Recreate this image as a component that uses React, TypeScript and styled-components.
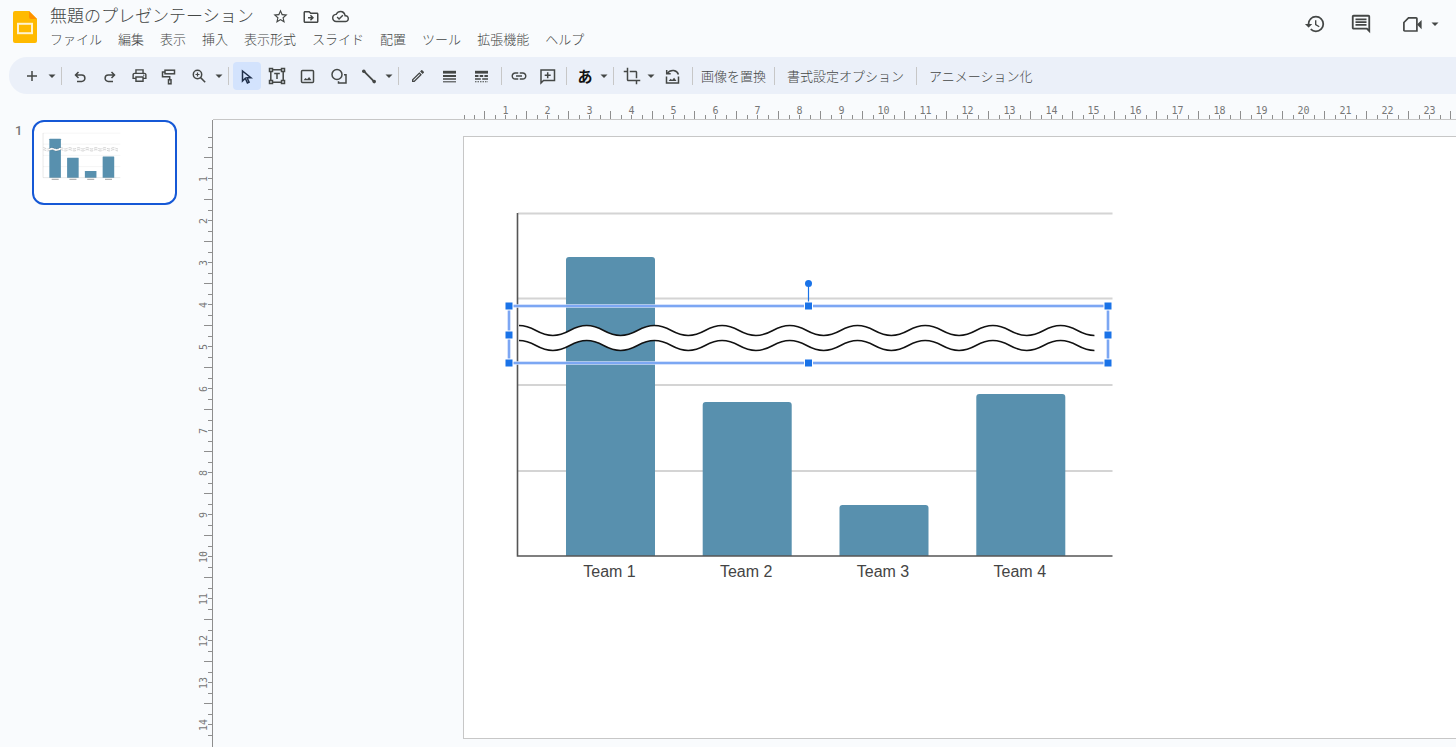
import React from "react";
import styled, { createGlobalStyle, css } from "styled-components";
import {
  MdCrop,
  MdHistory,
  MdLink,
  MdOutlineCloudDone,
  MdOutlineComment,
  MdOutlineDriveFileMove,
  MdOutlineEdit,
  MdOutlinePrint,
  MdStarBorder,
} from "react-icons/md";

const colors = {
  page: "#f9fbfd",
  toolbar: "#ebf0f9",
  active: "#d3e3fd",
  ink: "#444746",
  muted: "#777777",
  rule: "#c7c7c7",
  tick: "#8e8e8e",
  bar: "#5890ae",
  accent: "#1a73e8",
};

const GlobalStyle = createGlobalStyle`
  *, *::before, *::after { box-sizing: border-box; }
  body {
    margin: 0;
    background: ${colors.page};
    color: ${colors.ink};
    font-family: "Noto Sans CJK JP", sans-serif;
    font-weight: 300;
    font-size: 13px;
  }
  button {
    border: 0;
    padding: 0;
    background: none;
    color: inherit;
    font: inherit;
    cursor: pointer;
  }
  svg { display: block; flex: none; }
`;

const Page = styled.div`
  display: flex;
  flex-direction: column;
  min-height: 100vh;
  overflow: hidden;
`;

const Header = styled.header`
  display: flex;
  height: 57px;
  padding: 4px 16px 0 12px;
`;

const Logo = styled.a`
  flex: none;
  width: 37px;
  padding: 7px 0 0 1px;
`;

const HeaderMain = styled.div`
  flex: 1;
  min-width: 0;
`;

const TitleRow = styled.div`
  display: flex;
  align-items: center;
  gap: 12px;
  height: 25px;
`;

const Title = styled.h1`
  margin: 0 6px 0 1px;
  padding-bottom: 3px;
  font-size: 17px;
  font-weight: 300;
  line-height: 22px;
  white-space: nowrap;
`;

const PlainIcon = styled.button`
  display: flex;
  align-items: center;
  justify-content: center;
  width: 18px;
  height: 18px;
`;

const Menu = styled.nav`
  display: flex;
  gap: 16px;
  padding-left: 1px;
`;

const MenuItem = styled.button`
  height: 20px;
  line-height: 20px;
  white-space: nowrap;
`;

const HeaderActions = styled.div`
  display: flex;
  align-items: center;
  gap: 24px;
  height: 40px;
`;

const ActionIcon = styled.button<{ $wide?: boolean }>`
  display: flex;
  align-items: center;
  gap: 8px;
  height: 22px;
  padding-left: ${(p) => (p.$wide ? 6 : 0)}px;
`;

const Toolbar = styled.div`
  display: flex;
  align-items: center;
  height: 37px;
  margin-left: 9px;
  padding-left: 8px;
  border-radius: 18px 0 0 18px;
  background: ${colors.toolbar};
`;

const Divider = styled.span`
  flex: none;
  width: 1px;
  height: 18px;
  margin: 0 4px;
  background: ${colors.rule};
`;

const ToolButton = styled.button<{ $width?: number; $active?: boolean }>`
  display: flex;
  flex: none;
  align-items: center;
  justify-content: center;
  width: ${(p) => p.$width ?? 30}px;
  height: 28px;
  ${(p) =>
    p.$active &&
    css`
      border-radius: 4px;
      background: ${colors.active};
      color: #1f2f4a;
    `}
`;

const TextButton = styled.button<{ $pad: number }>`
  flex: none;
  height: 28px;
  padding: 0 ${(p) => p.$pad}px;
  line-height: 26px;
  white-space: nowrap;
`;

const InputGlyph = styled.span`
  color: #111;
  font-size: 15px;
  font-weight: 700;
  line-height: 28px;
`;

const Workspace = styled.main`
  display: grid;
  flex: 1;
  grid-template-columns: 196px 17px minmax(0, 1fr);
  grid-template-rows: 26px minmax(0, 1fr);
`;

const Filmstrip = styled.aside`
  display: flex;
  grid-row: 1 / 3;
  gap: 10px;
  align-items: flex-start;
  padding: 26px 0 0 15px;
`;

const SlideNumber = styled.span`
  width: 7px;
  padding-top: 2px;
  color: ${colors.muted};
  font-family: Roboto, sans-serif;
  font-size: 13px;
  font-weight: 500;
  line-height: 18px;
`;

const Thumbnail = styled.button`
  width: 145px;
  height: 85px;
  overflow: hidden;
  border: 2px solid #1558d6;
  border-radius: 12px;
  background: #fff;
`;

const rulerText = css`
  color: ${colors.muted};
  font-family: "DejaVu Sans Mono", monospace;
  font-size: 10px;
  font-weight: 400;
  line-height: 10px;
`;

const RulerX = styled.div`
  display: flex;
  grid-column: 3;
  overflow: hidden;
  border-bottom: 1px solid ${colors.rule};
`;

const ScaleX = styled.div`
  display: flex;
  flex: none;
  height: 26px;
  margin-left: 251px;
  border-bottom: 1px solid ${colors.tick};
`;

const CellX = styled.div`
  display: grid;
  flex: none;
  width: 42px;
  ${rulerText}

  > * {
    grid-area: 1 / 1;
  }
`;

const LabelX = styled.span`
  padding: 12px 0 0 1px;
  text-align: center;
`;

const TicksX = styled.div<{ $short?: boolean }>`
  display: grid;
  flex: none;
  grid-template-columns: ${(p) => (p.$short ? "10px 10px" : "11px 10px 11px 10px")};
  align-items: end;
  align-self: end;
`;

const TickX = styled.i<{ $tall?: boolean }>`
  height: ${(p) => (p.$tall ? 8 : 4)}px;
  border-left: 1px solid ${colors.tick};
`;

const RulerY = styled.div`
  grid-row: 2;
  grid-column: 2;
  height: 627px;
  min-height: 100%;
  overflow: hidden;
  padding-top: 17px;
  border-right: 1px solid ${colors.tick};
`;

const CellY = styled.div`
  display: grid;
  height: 42px;
  ${rulerText}

  > * {
    grid-area: 1 / 1;
  }
`;

const LabelY = styled.span`
  justify-self: start;
  margin-left: 3px;
  padding-bottom: 2px;
  text-align: center;
  writing-mode: vertical-rl;
  transform: rotate(180deg);
`;

const TicksY = styled.div<{ $short?: boolean }>`
  display: grid;
  grid-template-rows: ${(p) => (p.$short ? "10px 10px" : "11px 10px 11px 10px")};
  justify-items: end;
`;

const TickY = styled.i<{ $tall?: boolean }>`
  width: ${(p) => (p.$tall ? 8 : 4)}px;
  border-top: 1px solid ${colors.tick};
`;

const Canvas = styled.section`
  grid-column: 3;
  overflow: hidden;
  padding: 16px 0 8px 250px;
`;

const Slide = styled.div`
  width: 1070px;
  height: 603px;
  border: 1px solid ${colors.rule};
  background: #fff;
`;

const Icon = ({ children, size = 18 }: { children: React.ReactNode; size?: number }) => (
  <svg
    width={size}
    height={size}
    viewBox={`0 0 ${size} ${size}`}
    fill="none"
    stroke="currentColor"
    strokeWidth="1.5"
    aria-hidden="true"
  >
    {children}
  </svg>
);

const Caret = () => (
  <svg width="10" height="10" viewBox="0 0 10 10" fill="currentColor" aria-hidden="true">
    <path d="M1.5 3.5h7L5 7z" />
  </svg>
);

const CaretButton = ({ label }: { label: string }) => (
  <ToolButton $width={10} aria-label={label}>
    <Caret />
  </ToolButton>
);

const SlidesLogo = () => (
  <svg width="24" height="32" viewBox="0 0 24 32" aria-hidden="true">
    <path d="M2 0h14l8 8v22a2 2 0 0 1-2 2H2a2 2 0 0 1-2-2V2a2 2 0 0 1 2-2z" fill="#ffba00" />
    <path d="M16 0l8 8h-6a2 2 0 0 1-2-2z" fill="#ff9100" />
    <rect x="5" y="12.8" width="14" height="9.4" fill="none" stroke="#fff3d0" strokeWidth="2" />
  </svg>
);

const PaintIcon = () => (
  <Icon>
    <rect x="5" y="3.2" width="9.5" height="3.6" />
    <path d="M5 5H2.5v4.8h7.2v3" />
    <rect x="8.5" y="12.8" width="2.5" height="4" />
  </Icon>
);

const TextBoxIcon = () => (
  <Icon>
    <path d="M4.5 2.8h9M4.5 15.2h9M2.8 4.5v9M15.2 4.5v9" />
    <path d="M1.5 1.5h3v3h-3zM13.5 1.5h3v3h-3zM1.5 13.5h3v3h-3zM13.5 13.5h3v3h-3z" />
    <path d="M6.2 6.5h5.600M9 6.5v5.500" />
  </Icon>
);

const ImageIcon = () => (
  <Icon>
    <rect x="2.5" y="3.5" width="12" height="12" rx="1" />
    <path d="M4.5 13.200l2-2.200 1.600 1.300 2-2.400 2.400 3.300z" fill="currentColor" stroke="none" />
  </Icon>
);

const ShapeIcon = () => (
  <Icon>
    <circle cx="7" cy="7.5" r="5" />
    <path d="M14 7.800h2v8.200H8.500V14.200" />
  </Icon>
);

const LineIcon = () => (
  <Icon>
    <path d="M3.8 4.2l10.4 10.4" strokeWidth="1.8" />
    <circle cx="3.8" cy="4.2" r="1.8" fill="currentColor" stroke="none" />
    <circle cx="14.2" cy="14.6" r="1.8" fill="currentColor" stroke="none" />
  </Icon>
);

const WeightIcon = () => (
  <Icon>
    <path d="M3 5.2h13" strokeWidth="2.8" />
    <path d="M3 9h13" strokeWidth="2" />
    <path d="M3 12h13" />
    <path d="M3 14.8h13" strokeWidth="1.1" />
  </Icon>
);

const DashIcon = () => (
  <Icon>
    <path d="M3 5.2h13" strokeWidth="2.8" />
    <path d="M3 9h13" strokeWidth="1.8" strokeDasharray="3.5 1.2" />
    <path d="M3 12h13" strokeDasharray="5.800 1.400" />
    <path d="M3 14.8h13" strokeWidth="1.1" strokeDasharray="1.5 1" />
  </Icon>
);

const ResetImageIcon = () => (
  <Icon>
    <path d="M3.5 9.500v6.500h12V9.500M3.700 3v3.800h4" />
    <path d="M4.100 6.500C6 3.900 8.400 3.200 10.800 3.500c2.400.4 4 1.800 4.600 4" />
    <path d="M5.600 14l2-2.200 1.500 1.300 2-2.400 2.400 3.300z" fill="currentColor" stroke="none" />
  </Icon>
);

const VideoIcon = () => (
  <Icon size={20}>
    <path d="M6.500 3.900h7.600a.8.8 0 0 1 .8.8v12.300H2.700a.8.8 0 0 1-.8-.8V8.500z" strokeWidth="1.7" />
    <path d="M15 10.600l4.600-4.600v9.200z" fill="currentColor" stroke="none" />
  </Icon>
);

const teams = [
  { name: "Team 1", x: 566, top: 257 },
  { name: "Team 2", x: 702.7, top: 402 },
  { name: "Team 3", x: 839.5, top: 505 },
  { name: "Team 4", x: 976.3, top: 394 },
];

const BASE = 556;
const WAVE_START = 519;
const HALF_WAVE = 33.85;
const HALF_WAVES = 17;

/* A run of S-shaped half waves, drawn rightwards (dir 1) or back again (dir -1). */
const waveSegments = (crest: number, dir: 1 | -1) => {
  const trough = crest + 10;
  const parts: string[] = [];
  for (let i = 0; i < HALF_WAVES; i += 1) {
    const step = dir === 1 ? i : HALF_WAVES - i;
    const x0 = WAVE_START + step * HALF_WAVE;
    const x1 = x0 + dir * HALF_WAVE;
    const y0 = step % 2 === 0 ? crest : trough;
    const y1 = step % 2 === 0 ? trough : crest;
    const bend = dir * HALF_WAVE * 0.46;
    parts.push(`C${x0 + bend} ${y0} ${x1 - bend} ${y1} ${x1} ${y1}`);
  }
  return parts.join("");
};

const upper = `M${WAVE_START} 325.5${waveSegments(325.5, 1)}`;
const lower = `M${WAVE_START} 340.5${waveSegments(340.5, 1)}`;
const band = `${upper}V350.5${waveSegments(340.5, -1)}Z`;

const Chart = ({ labelled }: { labelled?: boolean }) => (
  <g>
    <path
      d="M518 213.5h594.5M518 298.5h594.5M518 385h594.5M518 471h594.5"
      stroke="#d4d4d4"
      strokeWidth="1.8"
    />
    {teams.map((t) => (
      <g key={t.name}>
        <path
          d={`M${t.x} ${BASE}V${t.top + 3}a3 3 0 0 1 3-3h83a3 3 0 0 1 3 3V${BASE}z`}
          fill={colors.bar}
        />
        {labelled ? (
          <text
            x={t.x + 43.5}
            y="577"
            textAnchor="middle"
            fontFamily="Liberation Sans, Arial, sans-serif"
            fontSize="16"
            fontWeight="400"
            fill="#444"
          >
            {t.name}
          </text>
        ) : (
          <path d={`M${t.x + 18} 570h54`} stroke="#b4b4b4" strokeWidth="9" />
        )}
      </g>
    ))}
    <path
      d={`M517.5 213V${BASE}H1112.5`}
      fill="none"
      stroke="#555"
      strokeWidth={labelled ? 1.6 : 1}
    />
    <path d={band} fill="#fff" />
    <path
      d={`${upper}${lower}`}
      fill="none"
      stroke="#111"
      strokeWidth="1.5"
      strokeDasharray={labelled ? undefined : "26 8"}
    />
  </g>
);

const handles = [
  [509, 306],
  [808.5, 306],
  [1108, 306],
  [509, 335],
  [1108, 335],
  [509, 363],
  [808.5, 363],
  [1108, 363],
];

const Selection = () => (
  <g>
    <rect x="509" y="306" width="599" height="57" fill="none" stroke="#c9dafb" strokeWidth="3.5" />
    <rect x="509" y="306" width="599" height="57" fill="none" stroke="#6a9af2" strokeWidth="1.6" />
    <path d="M808.5 284v20" stroke={colors.accent} strokeWidth="1.2" />
    <circle cx="808.5" cy="283.5" r="3.5" fill={colors.accent} />
    {handles.map(([x, y]) => (
      <rect
        key={`${x}-${y}`}
        x={x - 3.5}
        y={y - 3.5}
        width="7"
        height="7"
        fill={colors.accent}
        stroke="#fff"
        strokeWidth="2"
        paintOrder="stroke"
      />
    ))}
  </g>
);

const range = (n: number) => Array.from({ length: n }, (_, i) => i + 1);

const menus = ["ファイル", "編集", "表示", "挿入", "表示形式", "スライド", "配置", "ツール", "拡張機能", "ヘルプ"];

export default function App() {
  return (
    <Page>
      <GlobalStyle />
      <Header>
        <Logo href="#" aria-label="スライド ホーム">
          <SlidesLogo />
        </Logo>
        <HeaderMain>
          <TitleRow>
            <Title>無題のプレゼンテーション</Title>
            <PlainIcon aria-label="スター">
              <MdStarBorder size={17} />
            </PlainIcon>
            <PlainIcon aria-label="移動">
              <MdOutlineDriveFileMove size={18} />
            </PlainIcon>
            <PlainIcon aria-label="保存状況">
              <MdOutlineCloudDone size={17} />
            </PlainIcon>
          </TitleRow>
          <Menu>
            {menus.map((m) => (
              <MenuItem key={m}>{m}</MenuItem>
            ))}
          </Menu>
        </HeaderMain>
        <HeaderActions>
          <ActionIcon aria-label="変更履歴">
            <MdHistory size={22} />
          </ActionIcon>
          <ActionIcon aria-label="コメント">
            <MdOutlineComment size={22} />
          </ActionIcon>
          <ActionIcon $wide aria-label="通話">
            <VideoIcon />
            <Caret />
          </ActionIcon>
        </HeaderActions>
      </Header>

      <Toolbar role="toolbar" aria-label="ツールバー">
        <ToolButton aria-label="新しいスライド">
          <Icon>
            <path d="M9 4v10M4 9h10" />
          </Icon>
        </ToolButton>
        <CaretButton label="レイアウト" />
        <Divider />
        <ToolButton $width={28} aria-label="元に戻す">
          <Icon>
            <path d="M7.5 5l-3 3 3 3M4.500 8h6.200a3.200 3.200 0 0 1 0 6.400H6" />
          </Icon>
        </ToolButton>
        <ToolButton aria-label="やり直し">
          <Icon>
            <path d="M11.500 5l3 3-3 3M14.500 8H8.300a3.200 3.200 0 0 0 0 6.400H13" />
          </Icon>
        </ToolButton>
        <ToolButton aria-label="印刷">
          <MdOutlinePrint size={17} />
        </ToolButton>
        <ToolButton aria-label="書式を貼り付け">
          <PaintIcon />
        </ToolButton>
        <ToolButton aria-label="ズーム">
          <Icon>
            <circle cx="7.5" cy="7.5" r="4.2" />
            <path d="M10.6 10.6l4.6 4.6" />
            <path d="M7.5 5.5v4M5.5 7.5h4" strokeWidth="1.2" />
          </Icon>
        </ToolButton>
        <CaretButton label="ズームのオプション" />
        <Divider />
        <ToolButton $width={28} $active aria-label="選択" aria-pressed="true">
          <Icon>
            <path d="M4.500 4v10l2.800-2.800 2.100 4.700 1.700-.8-2-4.400h3.800z" />
          </Icon>
        </ToolButton>
        <ToolButton $width={31} aria-label="テキスト ボックス">
          <TextBoxIcon />
        </ToolButton>
        <ToolButton $width={31} aria-label="画像を挿入">
          <ImageIcon />
        </ToolButton>
        <ToolButton $width={31} aria-label="図形">
          <ShapeIcon />
        </ToolButton>
        <ToolButton aria-label="線">
          <LineIcon />
        </ToolButton>
        <CaretButton label="線の種類" />
        <Divider />
        <ToolButton aria-label="枠線の色">
          <MdOutlineEdit size={16} />
        </ToolButton>
        <ToolButton $width={32} aria-label="枠線の太さ">
          <WeightIcon />
        </ToolButton>
        <ToolButton $width={32} aria-label="枠線のスタイル">
          <DashIcon />
        </ToolButton>
        <Divider />
        <ToolButton $width={26} aria-label="リンクを挿入">
          <MdLink size={18} />
        </ToolButton>
        <ToolButton aria-label="コメントを追加">
          <Icon>
            <path d="M3 3h13.500v10.500H5.500L3 16z" />
            <path d="M9.700 5.300v6M6.700 8.300h6" />
          </Icon>
        </ToolButton>
        <Divider />
        <ToolButton $width={28} aria-label="入力ツール">
          <InputGlyph>あ</InputGlyph>
        </ToolButton>
        <CaretButton label="入力ツールのオプション" />
        <Divider />
        <ToolButton $width={28} aria-label="切り抜き">
          <MdCrop size={18} />
        </ToolButton>
        <CaretButton label="マスク" />
        <ToolButton $width={32} aria-label="画像をリセット">
          <ResetImageIcon />
        </ToolButton>
        <Divider />
        <TextButton $pad={4}>画像を置換</TextButton>
        <Divider />
        <TextButton $pad={8}>書式設定オプション</TextButton>
        <Divider />
        <TextButton $pad={8}>アニメーション化</TextButton>
      </Toolbar>

      <Workspace>
        <Filmstrip>
          <SlideNumber>1</SlideNumber>
          <Thumbnail aria-label="スライド 1">
            <svg width="141" height="81" viewBox="448 128 1085 623" aria-hidden="true">
              <Chart />
            </svg>
          </Thumbnail>
        </Filmstrip>

        <RulerX>
          <ScaleX>
            <TicksX $short>
              <TickX />
              <TickX />
            </TicksX>
            {range(23).map((n) => (
              <CellX key={n}>
                <LabelX>{n}</LabelX>
                <TicksX>
                  <TickX $tall />
                  <TickX />
                  <TickX />
                  <TickX />
                </TicksX>
              </CellX>
            ))}
            <TicksX $short>
              <TickX $tall />
            </TicksX>
          </ScaleX>
        </RulerX>

        <RulerY>
          <TicksY $short>
            <TickY />
            <TickY />
          </TicksY>
          {range(14).map((n) => (
            <CellY key={n}>
              <LabelY>{n}</LabelY>
              <TicksY>
                <TickY $tall />
                <TickY />
                <TickY />
                <TickY />
              </TicksY>
            </CellY>
          ))}
        </RulerY>

        <Canvas>
          <Slide>
            <svg width="660" height="480" viewBox="464 137 660 480" role="img" aria-label="チーム別の棒グラフ">
              <Chart labelled />
              <Selection />
            </svg>
          </Slide>
        </Canvas>
      </Workspace>
    </Page>
  );
}
